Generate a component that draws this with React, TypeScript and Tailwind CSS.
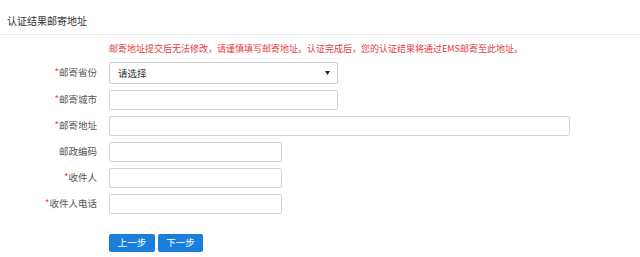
const rows: { label: string; required: boolean; width: string }[] = [
  { label: "邮寄城市", required: true, width: "w-[229px]" },
  { label: "邮寄地址", required: true, width: "w-[461px]" },
  { label: "邮政编码", required: false, width: "w-[173px]" },
  { label: "收件人", required: true, width: "w-[173px]" },
  { label: "收件人电话", required: true, width: "w-[173px]" },
];

function Label({ text, required }: { text: string; required: boolean }) {
  return (
    <div className="w-[97px] shrink-0 text-right text-[9.5px] leading-none text-[#555]">
      {required && <span className="text-[#e4393c]">*</span>}
      {text}
    </div>
  );
}

export default function App() {
  return (
    <div
      className="w-[640px] h-[257px] bg-white overflow-hidden"
      style={{ fontFamily: '"Noto Sans CJK SC", "Noto Sans", sans-serif' }}
    >
      <div className="h-[35px] border-b border-[#e8e8e8] pl-[7px] pt-[14px] text-[10px] leading-[14px] text-[#333]">
        认证结果邮寄地址
      </div>

      <p className="pl-[109px] pt-[8px] text-[9px] leading-[12px] text-[#e4393c]">
        邮寄地址提交后无法修改，请谨慎填写邮寄地址。认证完成后，您的认证结果将通过EMS邮寄至此地址。
      </p>

      <div className="mt-[7px] flex flex-col gap-[6px]">
        <div className="flex items-center gap-[12px]">
          <Label text="邮寄省份" required />
          <div className="w-[229px] h-[22px] border border-[#ccc] rounded-[2px] flex items-center justify-between pl-[8px] pr-[7px]">
            <span className="text-[9.5px] text-[#333]">请选择</span>
            <svg width="5" height="4" viewBox="0 0 5 4">
              <path d="M0 0 H5 L2.5 4 Z" fill="#222" />
            </svg>
          </div>
        </div>
        {rows.map((r) => (
          <div key={r.label} className="flex items-center gap-[12px]">
            <Label text={r.label} required={r.required} />
            <div className={`${r.width} h-[20px] border border-[#d4d4d4] rounded-[2px]`} />
          </div>
        ))}
      </div>

      <div className="mt-[20px] pl-[109px] flex gap-[3px]">
        <button className="w-[46px] h-[18px] bg-[#1a7fdc] rounded-[2px] text-white text-[9.5px] leading-none">
          上一步
        </button>
        <button className="w-[45px] h-[18px] bg-[#1a7fdc] rounded-[2px] text-white text-[9.5px] leading-none">
          下一步
        </button>
      </div>
    </div>
  );
}
